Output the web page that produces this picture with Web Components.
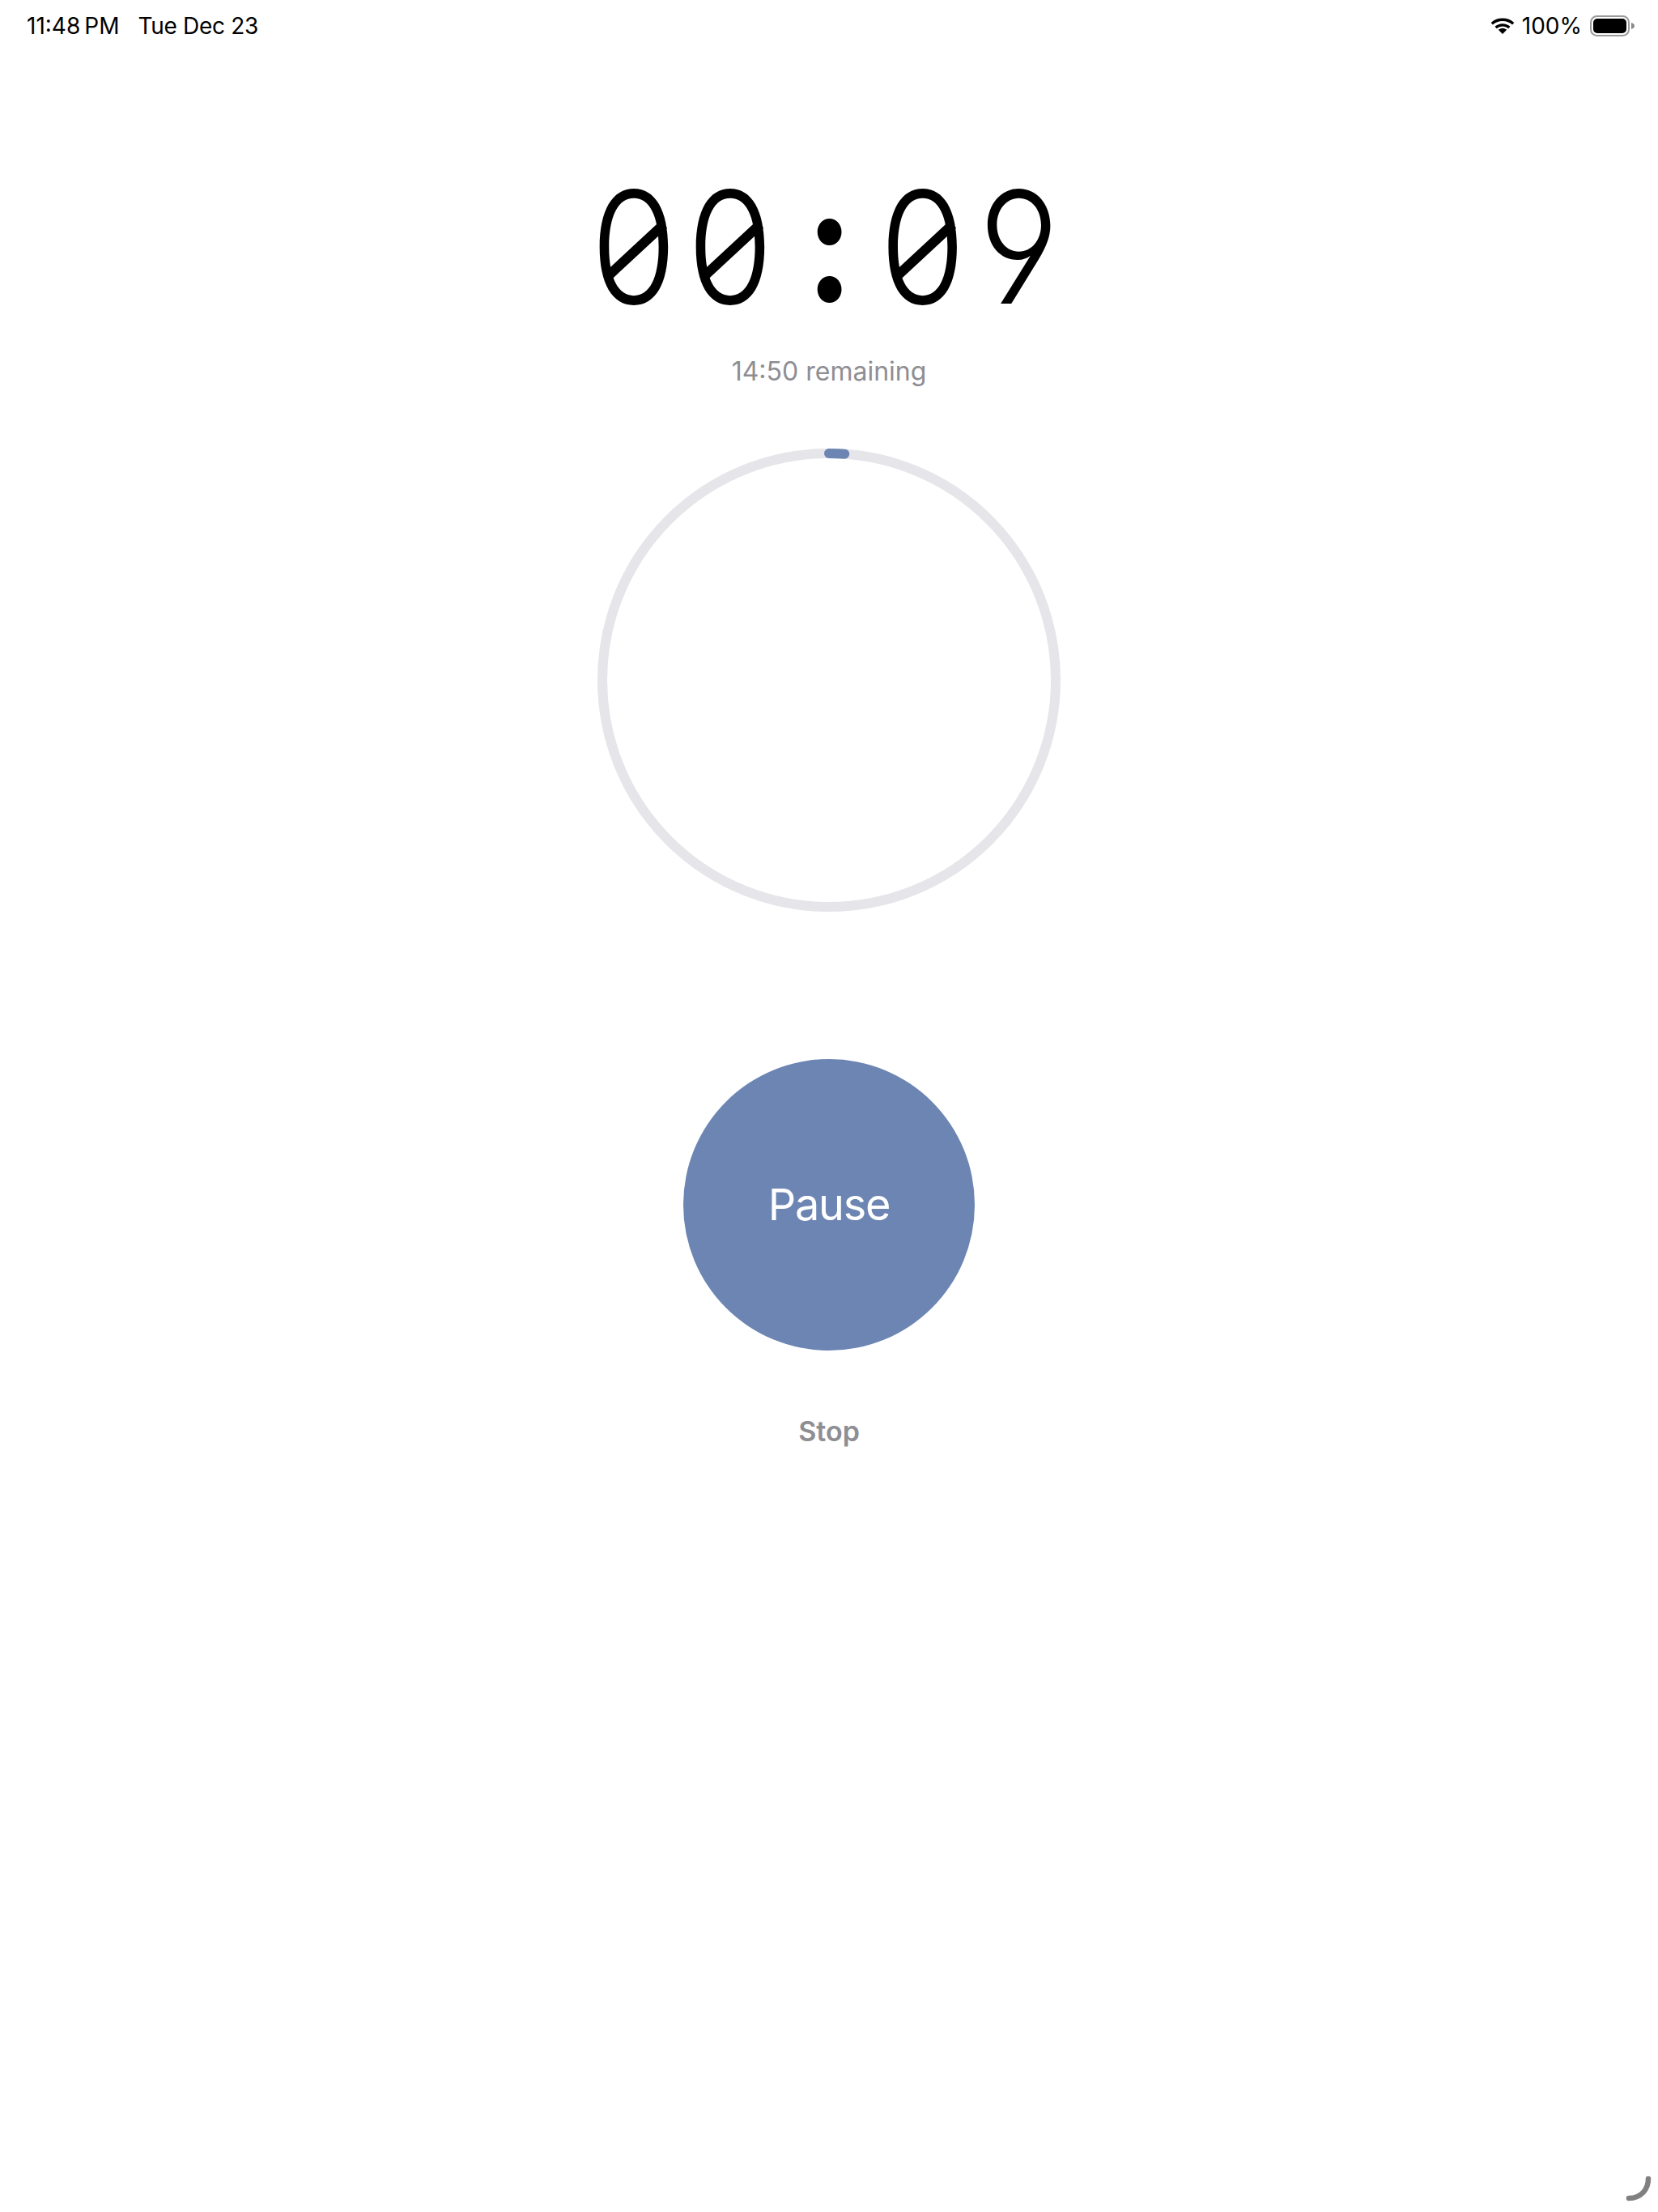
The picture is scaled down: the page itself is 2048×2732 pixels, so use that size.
<!DOCTYPE html>
<html lang="en">
<head>
<meta charset="utf-8">
<title>Timer</title>
<style>
  html, body { margin: 0; background: #fff; }
  body { width: 2048px; height: 2732px; position: relative; overflow: hidden; font-family: Inter, "Liberation Sans", sans-serif; }
  .screen { display: flex; flex-direction: column; align-items: center; }
  .grip { position: absolute; right: 0; bottom: 0; }
</style>
</head>
<body>
<div class="screen">
  <status-bar></status-bar>
  <timer-readout remaining="14:50 remaining">00<span>:</span>09</timer-readout>
  <progress-ring value="0.011"></progress-ring>
  <round-button>Pause</round-button>
  <text-button>Stop</text-button>
</div>
<svg class="grip" width="48" height="48" viewBox="0 0 48 48">
  <path d="M36 7 C36 20 27 31 12 31" fill="none" stroke="#808080" stroke-width="6.5" stroke-linecap="round"/>
</svg>

<script>
class StatusBar extends HTMLElement {
  connectedCallback() {
    this.attachShadow({ mode: 'open' });
    this.shadowRoot.innerHTML = `
      <style>
        :host {
          display: flex;
          align-self: stretch;
          justify-content: space-between;
          align-items: center;
          height: 36px;
          padding: 14px 28px 0 33px;
          font: 400 28px/36px Inter, sans-serif;
          color: #000;
        }
        .left, .right { display: flex; align-items: center; }
        .date { margin-left: 23px; letter-spacing: -.3px; }
        .thin { margin-left: 5px; }
        .wifi { margin-right: 9px; }
        .battery { margin-left: 10px; }
      </style>
      <div class="left"><span>11:48<span class="thin">PM</span></span><span class="date">Tue Dec 23</span></div>
      <div class="right">
        <svg class="wifi" width="30" height="20" viewBox="0 0 30 20">
          <path d="M1.8 7.2C9.2 .6 20.8 .6 28.2 7.2" fill="none" stroke="#000" stroke-width="3.4"/>
          <path d="M6.6 12C11.5 7.8 18.5 7.8 23.4 12" fill="none" stroke="#000" stroke-width="3.4"/>
          <path d="M15 20L9.800 14.800C12.800 12.400 17.200 12.400 20.200 14.800Z"/>
        </svg>
        <span>100%</span>
        <svg class="battery" width="56" height="26" viewBox="0 0 56 26">
          <rect x="1" y="1" width="47" height="24" rx="7.5" fill="none" stroke="#9a9a9a" stroke-width="2"/>
          <rect x="4" y="4" width="41" height="18" rx="5"/>
          <path d="M51 9C53.500 9.800 55 11 55 13C55 15 53.500 16.200 51 17Z" fill="#8a8a8a"/>
        </svg>
      </div>
    `;
  }
}

class TimerReadout extends HTMLElement {
  connectedCallback() {
    const slash = x => `<path d="M${x + 24} 132L${x + 93} 68"/>`;
    this.attachShadow({ mode: 'open' });
    this.shadowRoot.innerHTML = `
      <style>
        :host { display: flex; flex-direction: column; align-items: center; }
        .dial {
          position: relative;
          width: 595px;
          height: 192px;
          margin-top: 159px;
          display: flex;
          justify-content: center;
        }
        .time {
          flex: none;
          height: 192px;
          font: 300 192px/192px Inter, sans-serif;
          font-feature-settings: "tnum", "cv04";
          color: #000;
          white-space: nowrap;
          letter-spacing: 8px;
          transform: scaleX(.9);
        }
        ::slotted(span) {
          display: inline-block;
          width: 132px;
          text-align: center;
          letter-spacing: 0;
          font-size: 196px;
          font-weight: 700;
          line-height: 100px;
          vertical-align: 3px;
        }
        .dial svg { position: absolute; left: 0; top: 0; }
        .dial path { stroke: #000; stroke-width: 12; }
        .remaining {
          margin-top: 38px;
          font: 400 32px/40px Inter, sans-serif;
          color: #8e8e93;
        }
      </style>
      <div class="dial">
        <div class="time"><slot></slot></div>
        <svg width="595" height="192" viewBox="0 0 595 192">${slash(0)}${slash(119)}${slash(357)}</svg>
      </div>
      <div class="remaining">${this.getAttribute('remaining')}</div>
    `;
  }
}

class ProgressRing extends HTMLElement {
  connectedCallback() {
    const r = 280;
    const len = 2 * Math.PI * r;
    const value = parseFloat(this.getAttribute('value'));
    this.attachShadow({ mode: 'open' });
    this.shadowRoot.innerHTML = `
      <style>
        :host { display: block; width: 572px; height: 572px; margin-top: 75px; }
        svg { display: block; }
        circle { fill: none; stroke-width: 12; }
      </style>
      <svg width="572" height="572" viewBox="0 0 572 572">
        <circle cx="286" cy="286" r="${r}" stroke="#e5e5ea"/>
        <circle cx="286" cy="286" r="${r}" stroke="#6d85b3" stroke-linecap="round"
          stroke-dasharray="${len * value} ${len}" transform="rotate(-90 286 286)"/>
      </svg>
    `;
  }
}

class RoundButton extends HTMLElement {
  connectedCallback() {
    this.attachShadow({ mode: 'open' });
    this.shadowRoot.innerHTML = `
      <style>
        :host {
          display: flex;
          align-items: center;
          justify-content: center;
          width: 360px;
          height: 360px;
          margin-top: 182px;
          border-radius: 50%;
          background: #6d85b3;
          color: #fff;
          font: 400 54px/60px Inter, sans-serif;
          letter-spacing: -1.2px;
        }
      </style>
      <slot></slot>
    `;
  }
}

class TextButton extends HTMLElement {
  connectedCallback() {
    this.attachShadow({ mode: 'open' });
    this.shadowRoot.innerHTML = `
      <style>
        :host {
          display: block;
          margin-top: 80px;
          color: #8e8e93;
          font: 600 34px/40px Inter, sans-serif;
        }
      </style>
      <slot></slot>
    `;
  }
}

customElements.define('status-bar', StatusBar);
customElements.define('timer-readout', TimerReadout);
customElements.define('progress-ring', ProgressRing);
customElements.define('round-button', RoundButton);
customElements.define('text-button', TextButton);
</script>
</body>
</html>
